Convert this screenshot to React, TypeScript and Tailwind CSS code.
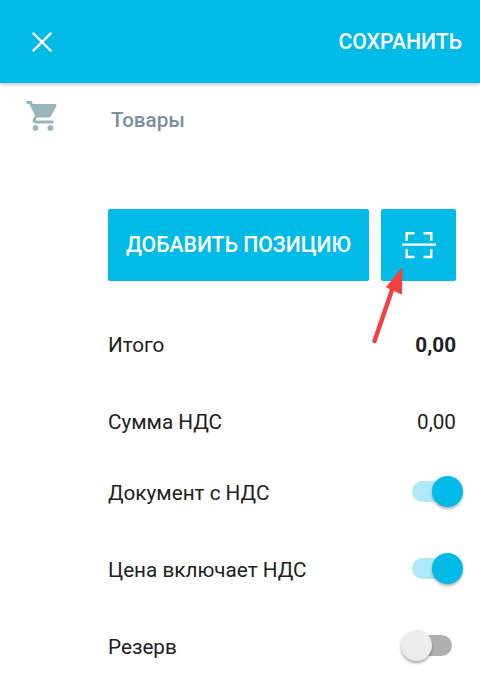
function Toggle({ on }: { on: boolean }) {
  return (
    <div className={`relative w-[40px] h-[21px] mr-[4px] mt-[-5px] rounded-full ${on ? "bg-[#b0e8f7]" : "bg-[#b0b0b0]"}`}>
      {on ? (
        <div className="absolute right-[-11px] top-[-5px] w-[31px] h-[31px] rounded-full bg-[#00bbe8] shadow-[0_2px_3px_rgba(0,0,0,0.3)]" />
      ) : (
        <div className="absolute left-[-11px] top-[-5px] w-[31px] h-[31px] rounded-full bg-[#ececec] shadow-[0_2px_3px_rgba(0,0,0,0.35)]" />
      )}
    </div>
  );
}

function Row({ label, children, className }: { label: string; children: React.ReactNode; className: string }) {
  return (
    <div className={`flex items-center justify-between pt-[2px] text-[20.7px] text-[#212121] ${className}`}>
      <span>{label}</span>
      {children}
    </div>
  );
}

export default function App() {
  return (
    <div className="relative w-[480px] h-[685px] overflow-hidden bg-white font-['Roboto',sans-serif]">
      {/* Header */}
      <div className="h-[83px] bg-[#00bbe8] flex items-center justify-between pl-[32px] pr-[18px] shadow-[0_1px_4px_rgba(0,0,0,0.3)]">
        <svg viewBox="0 0 20 20" className="w-[20px] h-[20px] stroke-white stroke-[2.3] fill-none">
          <path d="M0.8 0.8L19.2 19.2M19.2 0.8L0.8 19.2" />
        </svg>
        <span className="text-[21.2px] font-medium text-white">СОХРАНИТЬ</span>
      </div>

      {/* Goods */}
      <div className="flex items-start pl-[25px] pt-[15px] h-[126px]">
        <svg viewBox="0 0 24 24" className="w-[36px] h-[36px] fill-[#9bb5bc]">
          <path d="M7 18c-1.1 0-1.99.9-1.99 2S5.9 22 7 22s2-.9 2-2-.9-2-2-2zM1 2v2h2l3.6 7.59-1.35 2.45c-.16.28-.25.61-.25.96 0 1.1.9 2 2 2h12v-2H7.42c-.14 0-.25-.11-.25-.25l.03-.12.9-1.63h7.45c.75 0 1.41-.41 1.75-1.03l3.58-6.47c.08-.14.12-.31.12-.48 0-.55-.45-1-1-1H5.21l-.94-2H1zm16 16c-1.1 0-1.99.9-1.99 2s.89 2 1.99 2 2-.9 2-2-.9-2-2-2z" />
        </svg>
        <span className="ml-[50px] mt-[7px] text-[20.6px] font-medium text-[#78909c]">Товары</span>
      </div>

      <div className="pl-[108px] pr-[24px]">
        {/* Buttons */}
        <div className="flex gap-[12px]">
          <div className="w-[261px] h-[72px] rounded-[2px] bg-[#00bbe8] flex items-center justify-center text-[21.2px] font-medium text-white">
            ДОБАВИТЬ ПОЗИЦИЮ
          </div>
          <div className="w-[75px] h-[72px] rounded-[2px] bg-[#00bbe8] flex items-center justify-center">
            <svg viewBox="0 0 34 28" className="w-[34px] h-[28px] fill-none stroke-white stroke-[2.4]">
              <path d="M4.7 10V2.3H12.5M21.5 2.3H29.3V10M4.7 18V26H12.5M21.5 26H29.3V18" />
              <path d="M0 13.6H34" />
            </svg>
          </div>
        </div>

        <Row label="Итого" className="mt-[49px] h-[30px]">
          <span className="font-bold">0,00</span>
        </Row>
        <Row label="Сумма НДС" className="mt-[47px] h-[30px]">
          <span>0,00</span>
        </Row>
        <Row label="Документ с НДС" className="mt-[41px] h-[30px]">
          <Toggle on />
        </Row>
        <Row label="Цена включает НДС" className="mt-[47px] h-[30px]">
          <Toggle on />
        </Row>
        <Row label="Резерв" className="mt-[47px] h-[30px]">
          <Toggle on={false} />
        </Row>
      </div>

      {/* Arrow annotation */}
      <svg viewBox="0 0 480 685" className="absolute inset-0 w-[480px] h-[685px] pointer-events-none">
        <path d="M374.5 341L392 290" stroke="#f44040" strokeWidth="4.4" strokeLinecap="round" fill="none" />
        <path d="M402 268L386.5 287L401.5 294Z" fill="#f44040" stroke="#f44040" strokeWidth="1" strokeLinejoin="round" />
      </svg>
    </div>
  );
}
